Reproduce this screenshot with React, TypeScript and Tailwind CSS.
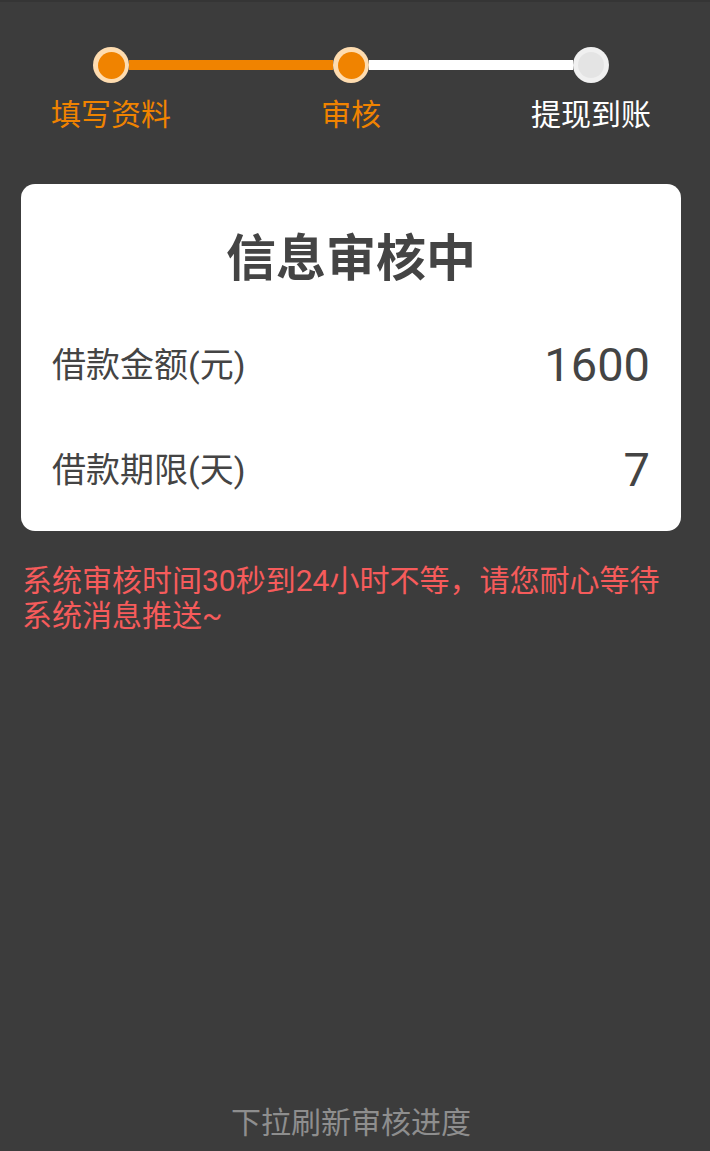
const font = "font-['Roboto','Noto_Sans_CJK_SC',sans-serif]";

type StepState = "done" | "current" | "todo";

const steps: { label: string; state: StepState }[] = [
  { label: "填写资料", state: "done" },
  { label: "审核", state: "current" },
  { label: "提现到账", state: "todo" },
];

function Dot({ state }: { state: StepState }) {
  if (state === "todo") {
    return (
      <div className="w-9 h-9 shrink-0 rounded-full bg-[#f0f0f0] flex items-center justify-center">
        <div className="w-[26px] h-[26px] rounded-full bg-[#e4e4e4]" />
      </div>
    );
  }
  return (
    <div className="w-9 h-9 shrink-0 rounded-full bg-[#fedcb0] flex items-center justify-center">
      <div className="w-[27px] h-[27px] rounded-full bg-[#f08300]" />
    </div>
  );
}

function Stepper() {
  return (
    <div className="px-[93px] pt-[45px]">
      <div className="flex items-center">
        <Dot state={steps[0].state} />
        <div className="flex-1 h-[10px] bg-[#f08300]" />
        <Dot state={steps[1].state} />
        <div className="flex-1 h-[10px] bg-white" />
        <Dot state={steps[2].state} />
      </div>
      <div className="flex mt-[14px]">
        {steps.map((s, i) => (
          <div key={i} className={`flex justify-center ${i < 2 ? "w-9 mr-[204px]" : "w-9"}`}>
            <span
              className={`whitespace-nowrap text-[30px] leading-[36px] ${
                s.state === "todo" ? "text-white" : "text-[#f08300]"
              }`}
            >
              {s.label}
            </span>
          </div>
        ))}
      </div>
    </div>
  );
}

function Row({ label, value }: { label: string; value: string }) {
  return (
    <div className="flex items-center justify-between h-[60px] pl-[31px] pr-[31px]">
      <span className="text-[34px] text-[#444]">{label}</span>
      <span className="text-[47px] text-[#444]">{value}</span>
    </div>
  );
}

export default function App() {
  return (
    <div className={`w-full h-[1151px] bg-[#3c3c3c] ${font}`}>
      <div className="h-[2px] bg-[#353535]" />
      <div className="w-[702px] h-[1149px] flex flex-col">
        <Stepper />

        <div className="mx-[21px] mt-[51px] bg-white rounded-[14px] pt-[45px] pb-[31px]">
          <h1 className="text-center text-[50px] leading-[60px] font-bold text-[#444]">信息审核中</h1>
          <div className="mt-[46px]">
            <Row label="借款金额(元)" value="1600" />
          </div>
          <div className="mt-[45px]">
            <Row label="借款期限(天)" value="7" />
          </div>
        </div>

        <p className="px-[22px] mt-[32px] text-[30px] leading-[35px] text-[#f65b5b]">
          系统审核时间30秒到24小时不等，请您耐心等待系统消息推送~
        </p>

        <div className="mt-auto pb-[8px] text-center text-[30px] leading-[40px] text-[#8e8e8e]">
          下拉刷新审核进度
        </div>
      </div>
    </div>
  );
}
